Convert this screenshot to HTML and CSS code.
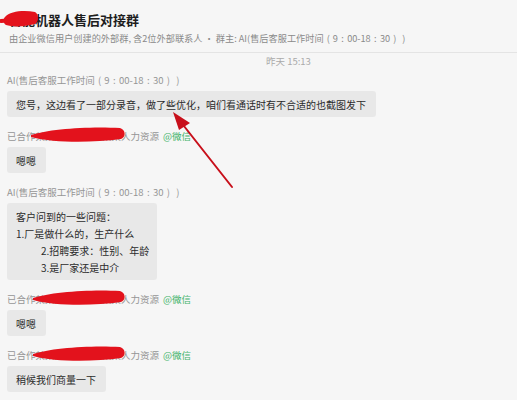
FILE: index.html
```html
<!DOCTYPE html>
<html lang="zh">
<head>
<meta charset="utf-8">
<link rel="stylesheet" href="styles.css">
</head>
<body>
<div class="page">
  <header class="header">
    <div class="title">智能机器人售后对接群</div>
    <div class="subtitle">由企业微信用户创建的外部群, 含2位外部联系人 · 群主: AI(售后客服工作时间<span class="fw">(</span>9<span class="fw">:</span>00-18<span class="fw">:</span>30<span class="fw">)</span><span class="fw">)</span></div>
  </header>
  <div class="chat">
    <div class="time">昨天 15:13</div>
    <div class="msg">
      <div class="sender">AI(售后客服工作时间<span class="fw">(</span>9<span class="fw">:</span>00-18<span class="fw">:</span>30<span class="fw">)</span><span class="fw">)</span></div>
      <div class="bubble">您号，这边看了一部分录音，做了些优化，咱们看通话时有不合适的也截图发下</div>
    </div>
    <div class="msg">
      <div class="sender">已合作某某某某某某某某某人力资源<span class="wx">@微信</span></div>
      <div class="bubble">嗯嗯</div>
    </div>
    <div class="msg">
      <div class="sender">AI(售后客服工作时间<span class="fw">(</span>9<span class="fw">:</span>00-18<span class="fw">:</span>30<span class="fw">)</span><span class="fw">)</span></div>
      <div class="bubble bubble-multi">
        <div>客户问到的一些问题：</div>
        <div>1.厂是做什么的，生产什么</div>
        <div class="indent">2.招聘要求：性别、年龄</div>
        <div class="indent">3.是厂家还是中介</div>
      </div>
    </div>
    <div class="msg">
      <div class="sender">已合作某某某某某某某某某人力资源<span class="wx">@微信</span></div>
      <div class="bubble">嗯嗯</div>
    </div>
    <div class="msg">
      <div class="sender">已合作某某某某某某某某某人力资源<span class="wx">@微信</span></div>
      <div class="bubble">稍候我们商量一下</div>
    </div>
  </div>
  <svg class="marks" width="517" height="400" viewBox="0 0 517 400">
    <path d="M5,17 C10,11 24,10 35,12 C39,14 39,22 35,24 C24,27 12,27 6,25 C3,23 3,19 5,17 Z" fill="#e3121c"/>
    <path d="M1,21 L14,20" stroke="#e3121c" stroke-width="4" stroke-linecap="round"/>
    <path d="M31,135 C48,129 90,126 120,128 C126,130 126,137 121,139 C90,143 55,143 31,137 Z" fill="#e3121c"/>
    <path d="M33,298 C50,292 92,289 120,291 C126,293 126,300 121,302 C92,306 56,306 33,300 Z" fill="#e3121c"/>
    <path d="M33,354 C50,348 92,345 120,347 C126,349 126,356 121,358 C92,362 56,362 33,356 Z" fill="#e3121c"/>
    <line x1="232" y1="187" x2="180" y2="121" stroke="#c8101b" stroke-width="2" stroke-linecap="round"/>
    <polygon points="173,112 190,123 179,130" fill="#c8101b"/>
  </svg>
</div>
</body>
</html>
```

FILE: styles.css
```css
* {
  box-sizing: border-box;
}

html, body {
  margin: 0;
  padding: 0;
  background: #f6f6f6;
}

body {
  font-family: "Noto Sans CJK SC", "Noto Sans", "Liberation Sans", sans-serif;
  color: #333;
}

.page {
  position: relative;
  width: 517px;
  height: 400px;
  overflow: hidden;
}

.header {
  padding: 10px 9px 7px;
  border-bottom: 1px solid #e4e4e4;
}

.title {
  font-size: 13px;
  line-height: 19px;
  font-weight: bold;
  color: #1e1e1e;
}

.subtitle {
  margin-top: 2px;
  font-size: 9.2px;
  line-height: 14px;
  color: #8a8a8a;
  white-space: nowrap;
}

.fw {
  display: inline-block;
  width: 1em;
  text-align: center;
}

.chat {
  padding: 0 7px;
}

.time {
  margin: 2px 0 6px;
  padding-left: 259px;
  font-size: 9.5px;
  line-height: 12px;
  color: #aaa;
}

.msg {
  margin-bottom: 12px;
}

.sender {
  font-size: 9.5px;
  line-height: 14px;
  color: #959595;
  white-space: nowrap;
}

.wx {
  margin-left: 4px;
  color: #3fb36a;
}

.bubble {
  display: inline-block;
  margin-top: 4px;
  padding: 5px 10px 4px 9px;
  background: #e8e8e8;
  border-radius: 3px;
  font-size: 10px;
  line-height: 17px;
  color: #2b2b2b;
  white-space: nowrap;
}

.bubble-multi {
  padding: 5px 8px 4px 9px;
}

.indent {
  padding-left: 25px;
}

.marks {
  position: absolute;
  left: 0;
  top: 0;
  pointer-events: none;
}
```
